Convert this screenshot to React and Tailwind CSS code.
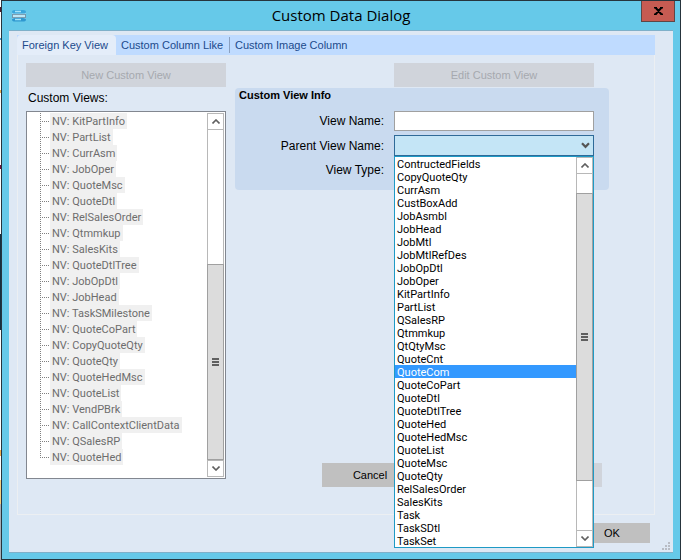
const treeItems = [
  "KitPartInfo", "PartList", "CurrAsm", "JobOper", "QuoteMsc", "QuoteDtl",
  "RelSalesOrder", "Qtmmkup", "SalesKits", "QuoteDtlTree", "JobOpDtl",
  "JobHead", "TaskSMilestone", "QuoteCoPart", "CopyQuoteQty", "QuoteQty",
  "QuoteHedMsc", "QuoteList", "VendPBrk", "CallContextClientData",
  "QSalesRP", "QuoteHed",
];

const parentViews = [
  "ContructedFields", "CopyQuoteQty", "CurrAsm", "CustBoxAdd", "JobAsmbl",
  "JobHead", "JobMtl", "JobMtlRefDes", "JobOpDtl", "JobOper", "KitPartInfo",
  "PartList", "QSalesRP", "Qtmmkup", "QtQtyMsc", "QuoteCnt", "QuoteCom",
  "QuoteCoPart", "QuoteDtl", "QuoteDtlTree", "QuoteHed", "QuoteHedMsc",
  "QuoteList", "QuoteMsc", "QuoteQty", "RelSalesOrder", "SalesKits", "Task",
  "TaskSDtl", "TaskSet",
];

const listFont = "font-['Roboto','Liberation_Sans',sans-serif] text-[11px]";

function ArrowButton({ up, label }) {
  return (
    <button
      aria-label={label}
      className="flex h-[17px] w-full shrink-0 items-center justify-center border border-[#b8b8b8] bg-white"
    >
      <svg width="8" height="5" viewBox="0 0 8 5" fill="none" stroke="#606060" strokeWidth="1.6">
        <path d={up ? "M0.5 4.5 4 1 7.5 4.5" : "M0.5 0.5 4 4 7.5 0.5"} />
      </svg>
    </button>
  );
}

function ScrollBar({ before, after }) {
  return (
    <div className="flex w-[17px] shrink-0 flex-col">
      <ArrowButton up label="Scroll up" />
      <div className={`${before} border-x border-[#b8b8b8] bg-white`} />
      <div className="flex flex-1 flex-col items-center justify-center gap-px border border-[#a0a0a0] bg-[#dcdcdc]">
        <i className="h-[2px] w-[7px] bg-[#606060]" />
        <i className="h-[2px] w-[7px] bg-[#606060]" />
        <i className="h-[2px] w-[7px] bg-[#606060]" />
      </div>
      <div className={`${after} border-x border-[#b8b8b8] bg-white`} />
      <ArrowButton label="Scroll down" />
    </div>
  );
}

function DataIcon() {
  return (
    <svg width="16" height="14" viewBox="0 0 16 14">
      <rect x="1" y="3" width="14" height="8" fill="#9ad6ee" />
      <path d="M1 3Q1 1 4 1H12Q15 1 15 3Q15 4.500 12 4.500H4Q1 4.500 1 3Z" fill="#3aa6dc" />
      <path d="M4 2.500H10" stroke="#a5e4fa" strokeWidth="1.500" />
      <path d="M1 5.500H15M1 8.500H15" stroke="#7d9fb2" />
      <path d="M1.500 5V9M14.500 5V9" stroke="#7397ac" />
      <path d="M2 7H14" stroke="#c9ecf8" strokeWidth="1.500" />
      <path d="M1 10.500Q1 9 4 9H12Q15 9 15 10.500Q15 12.500 12 12.500H4Q1 12.500 1 10.500Z" fill="#2e98d0" />
      <path d="M4 10.500H10" stroke="#a5e4fa" strokeWidth="1.500" />
    </svg>
  );
}

function TreeView() {
  return (
    <div className="flex h-[368px] border border-[#828790] bg-white p-px">
      <ul aria-labelledby="views-label" className="flex-1 pl-3">
        {treeItems.map((name, i) => (
          <li key={name} className="flex h-4 items-stretch">
            <span className={`w-px bg-[repeating-linear-gradient(#808080_0_1px,transparent_1px_2px)] ${i === treeItems.length - 1 ? "h-[9px]" : "h-4"}`} />
            <span className="mt-2 mr-px h-px w-[8px] bg-[repeating-linear-gradient(90deg,transparent_0_1px,#808080_1px_2px)]" />
            <span className={`${listFont} bg-[#f0f0f0] px-[2px] leading-[18px] whitespace-nowrap text-[#6d6d6d]`}>
              NV: {name}
            </span>
          </li>
        ))}
      </ul>
      <ScrollBar before="h-[134px]" after="h-0" />
    </div>
  );
}

function ParentViewPicker() {
  return (
    <div className="relative">
      <select
        id="parent-view"
        className="block h-[21px] w-full appearance-none border border-[#2f6a98] bg-[#c4e5f6] px-1 text-[12px]"
        defaultValue=""
      >
        <option value=""></option>
        {parentViews.map((v) => <option key={v}>{v}</option>)}
      </select>
      <svg className="pointer-events-none absolute top-[7px] right-1" width="9" height="7" viewBox="0 0 9 7" fill="none" stroke="#555" strokeWidth="2.2">
        <path d="M1 1.200 4.500 4.800 8 1.200" />
      </svg>
      <div className="absolute top-full right-0 left-0 z-10 flex border border-[#1f9ac5] bg-white">
        <ul role="listbox" aria-label="Parent views" className={`${listFont} min-w-0 flex-1`}>
          {parentViews.map((v) => (
            <li
              key={v}
              role="option"
              aria-selected={v === "QuoteCom"}
              className={`h-[13px] pl-[2px] leading-[15px] ${v === "QuoteCom" ? "bg-[#3399ff] text-white" : "text-black"}`}
            >
              {v}
            </li>
          ))}
        </ul>
        <ScrollBar before="h-[19px]" after="h-[49px]" />
      </div>
    </div>
  );
}

export default function App() {
  return (
    <div className="flex min-h-screen w-full bg-[linear-gradient(#fff_0_7px,#501828_7px_12px,#fff_12px_38px,#4aa0d0_38px_40px,#fff_40px_90px,#e8b050_90px_93px,#fff_93px_165px,#701040_165px_169px,#fff_169px_234px,#123040_234px_330px,#fff_330px_450px,#f0b050_450px_456px,#fff_456px_480px,#f5d080_480px_504px,#a8b0b8_504px)] pl-px font-['Liberation_Sans',Arial,sans-serif] text-[11px] text-black">
      <div className="flex flex-1 flex-col border border-[#26343d] bg-[#66c9e9] pb-[6px]">
        <header className="grid h-[29px] grid-cols-[1fr_auto_1fr] items-start px-[5px]">
          <span className="pt-2 pl-1"><DataIcon /></span>
          <h1 className="font-['Open_Sans',sans-serif] text-[15px] leading-[29px]">Custom Data Dialog</h1>
          <button
            aria-label="Close"
            className="flex h-[21px] w-[34px] items-center justify-center justify-self-end border border-t-0 border-[#5f4646] bg-[#c65b52]"
          >
            <svg width="9" height="8" viewBox="0 0 9 8" stroke="#000" strokeWidth="2" fill="none">
              <path d="M1.500 0.500 7.500 7.500M7.500 0.500 1.500 7.500M0 0.500H3M6 0.500H9M0 7.500H3M6 7.500H9" />
            </svg>
          </button>
        </header>

        <main className="relative mx-[7px] flex flex-1 flex-col border-y border-[#7fb0c9] bg-[#dee8f4] px-2 pt-1 pb-[9px]">
          <div className="mr-[10px]">
            <div role="tablist" className="flex h-5 bg-[#bfdbff] text-[#204a8c]">
              <button role="tab" aria-selected="true" className="w-[99px] rounded-t-sm bg-[#e4edf9] pl-[5px] text-left whitespace-nowrap">Foreign Key View</button>
              <button role="tab" aria-selected="false" className="my-[2px] w-[114px] border-r border-[#8aa0c0] pl-[5px] text-left whitespace-nowrap">Custom Column Like</button>
              <button role="tab" aria-selected="false" className="my-[2px] w-[124px] pl-[5px] text-left whitespace-nowrap">Custom Image Column</button>
            </div>
            <section className="flex h-[460px] gap-[9px] border border-t-0 border-[#eceff2] pt-2 pl-2">
              <div className="w-[200px] shrink-0">
                <button disabled className="h-6 w-full bg-[#d0d4db] text-[#a6a9af]">New Custom View</button>
                <div id="views-label" className="h-6 pl-[2px] text-[12px] leading-[22px]">Custom Views:</div>
                <TreeView />
              </div>
              <div className="flex w-[374px] flex-col">
                <button disabled className="mr-[15px] h-6 w-[200px] self-end bg-[#d0d4db] text-[#a6a9af]">Edit Custom View</button>
                <fieldset className="mt-px h-[102px] rounded bg-[#c9daef] pr-[15px]">
                  <legend className="float-left h-[23px] w-full pl-1 font-bold leading-[14px]">Custom View Info</legend>
                  <div className="clear-both grid grid-cols-[1fr_200px] items-center gap-x-[10px] gap-y-1 text-[12px]">
                    <label htmlFor="view-name" className="text-right">View Name:</label>
                    <input id="view-name" type="text" className="h-5 border border-[#a0a0a0] bg-white px-1" />
                    <label htmlFor="parent-view" className="text-right">Parent View Name:</label>
                    <ParentViewPicker />
                    <span className="text-right leading-5">View Type:</span>
                  </div>
                </fieldset>
                <div className="mt-auto mr-[7px] mb-[27px] ml-[87px] flex justify-between">
                  <button className="h-6 w-24 bg-[#c0c0c0]">Cancel</button>
                  <button disabled aria-label="Apply" className="h-6 w-24 bg-[#d0d4db]" />
                </div>
              </div>
            </section>
          </div>
          <footer className="mt-auto mr-[15px] flex justify-end">
            <button className="h-5 w-[76px] bg-[#c0c0c0]">OK</button>
          </footer>
          <svg className="absolute right-[2px] bottom-px" width="9" height="9" viewBox="0 0 9 9" fill="#b8bcc4">
            <path d="M6 0h2v2h-2zM6 3h2v2h-2zM3 3h2v2h-2zM6 6h2v2h-2zM3 6h2v2h-2zM0 6h2v2h-2z" />
          </svg>
        </main>
      </div>
    </div>
  );
}
